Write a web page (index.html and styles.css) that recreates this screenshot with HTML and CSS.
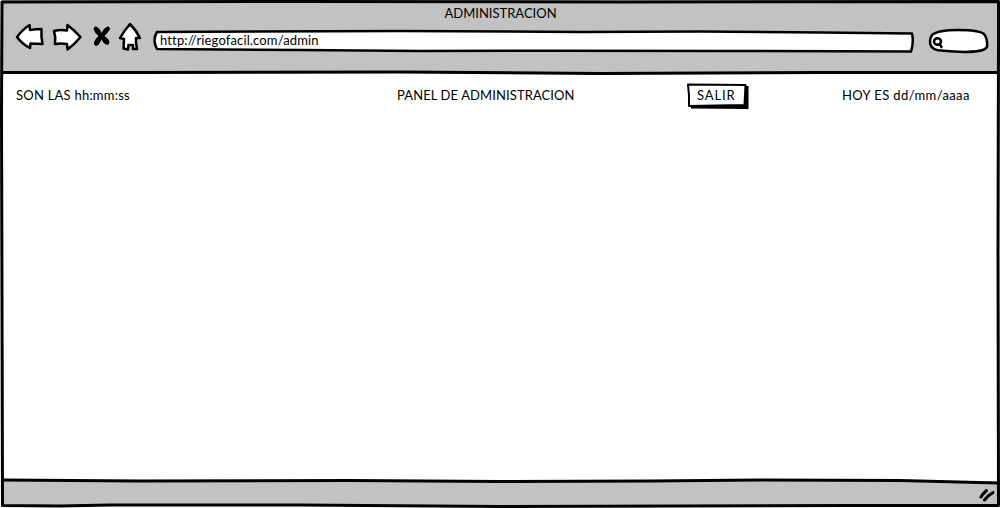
FILE: index.html
```html
<!DOCTYPE html>
<html lang="es">
<head>
<meta charset="utf-8">
<title>ADMINISTRACION</title>
<link rel="stylesheet" href="styles.css">
</head>
<body>
<div class="window">
  <header class="chrome">
    <div class="title"><span class="title-text">ADMINISTRACION</span></div>
    <div class="toolbar">
      <svg class="nav" width="130" height="32" viewBox="14 21 130 32">
        <path class="ink" d="M17 37Q23 29 29.500 25L30 30Q36 29 41.500 29Q41 37 42.500 44L30.500 43.500L30 48Q22 44 17 37Z"/>
        <path class="ink" d="M54 31Q60 29.500 67 30.500L67.500 25Q74 30 80.500 37Q74 45 67.500 49.500L67 44Q61 43 55 44Q56 37 54 31Z"/>
        <path class="solid" d="M96 26.500Q100 28 101.500 33Q104 27.500 108 26.500Q111 27 109.500 30Q107.500 33 104.500 36Q108 38 109.500 42Q109 46 106 44.500Q103 43 101.500 39.500Q99 45.500 96 46Q93 45 94.500 41Q96 38 98.500 36Q94.500 33 93.500 29Q94 26 96 26.500Z"/>
        <path class="ink" d="M130 24Q136 30 140 38L136 38Q135.500 43 137 49L133 49L133 45L128.500 45L128 49.500L123.500 48.500L124 39L120 38Q124 31 130 24Z"/>
      </svg>
      <div class="address">
        <svg class="shape" width="764" height="26" viewBox="152 28 764 26">
          <path class="ink" d="M157 32L400 31L580 32L700 31.500L822 32.500L912 33.500Q914 42 911 51.500L720 51L560 50.800L420 51L300 50L157 49Q152 40 157 32Z"/>
        </svg>
        <span class="url">http://riegofacil.com/admin</span>
      </div>
      <div class="search">
        <svg width="62" height="28" viewBox="928 27 62 28">
          <path class="ink" d="M932 35Q938 30 958 30Q979 30 984 34Q988 39 987 47Q984 52 964 52Q943 51 937 50Q930 48 930 42Q930 38 932 35Z"/>
          <ellipse class="ink" cx="937.500" cy="41.500" rx="3.500" ry="3.300"/>
          <path class="ink" d="M939.500 44L941.500 47"/>
        </svg>
      </div>
    </div>
  </header>
  <main class="page">
    <span class="clock">SON LAS hh:mm:ss</span>
    <span class="heading">PANEL DE ADMINISTRACION</span>
    <button class="exit">
      <svg class="shape" width="64" height="28" viewBox="686 82 64 28">
        <path class="solid" d="M691 86L748.500 86L748.500 109L691 108.500Z"/>
        <path class="ink thin" d="M688 84.500L745.500 85L744.500 105L689 106Q689.500 96 688 84.500Z"/>
      </svg>
      <span class="exit-text">SALIR</span>
    </button>
    <span class="date">HOY ES dd/mm/aaaa</span>
  </main>
  <footer class="status">
    <svg width="18" height="16" viewBox="978 487 18 16">
      <path class="grip" d="M981 497Q983 493.500 986.500 490.500M984.500 500Q988 495.500 993 492.500"/>
    </svg>
  </footer>
  <svg class="frame" width="1001" height="508" viewBox="0 0 1001 508">
    <path d="M2 2L300 1.500L620 2L998.500 1.500L998.500 40L998 250L998.500 505.500L850 505.500L500 506.500L300 505L110 505L60 506L2.500 505.500L2 300L1.500 110L2 2Z"/>
    <path d="M2 72.500L140 72.500L400 72L600 73.500L820 72.500L998 72.500"/>
    <path d="M2 480L140 481L350 480.500L500 481.500L650 481L760 480L900 480.500L998 483"/>
  </svg>
</div>
</body>
</html>
```
FILE: styles.css
```css
body {
  margin: 0;
  background: #fff;
  color: #000;
  font: 13px/16px Lato, "Open Sans", sans-serif;
}
.window {
  position: relative;
  display: flex;
  flex-direction: column;
  width: 1001px;
  height: 508px;
  overflow: hidden;
}
svg { display: block; flex: none; }
span { white-space: nowrap; }
.ink { fill: #fff; stroke: #000; stroke-width: 2.5; stroke-linejoin: round; stroke-linecap: round; }
.thin { stroke-width: 2; }
.solid { fill: #000; }
.grip { fill: none; stroke: #000; stroke-width: 3; stroke-linecap: round; }
.frame { position: absolute; inset: 0; pointer-events: none; }
.frame path { fill: none; stroke: #000; stroke-width: 3; stroke-linejoin: round; }
.chrome {
  box-sizing: border-box;
  height: 73px;
  margin: 0 2px;
  padding-top: 5px;
  background: #c2c2c2;
}
.title { height: 16px; padding-left: 442.5px; }
.toolbar { display: flex; align-items: flex-start; padding-left: 12px; }
.address { display: grid; width: 764px; margin: 7px 12px 0 8px; }
.address > *, .exit > * { grid-area: 1 / 1; }
.url { padding: 4px 0 0 8px; z-index: 1; letter-spacing: .14px; font-variant-ligatures: none; }
.search { padding-top: 6px; }
.page {
  display: flex;
  align-items: flex-start;
  box-sizing: border-box;
  height: 408px;
  padding: 14px 0 0 16px;
}
.clock { width: 381px; letter-spacing: .23px; }
.heading { width: 289px; letter-spacing: .1px; }
.exit {
  display: grid;
  width: 64px;
  height: 28px;
  margin: -5px 92px 0 0;
  padding: 0;
  border: 0;
  background: none;
  color: inherit;
  font: inherit;
  text-align: left;
}
.exit-text { padding: 5px 0 0 11px; z-index: 1; letter-spacing: .9px; }
.date { letter-spacing: .38px; }
.status {
  display: flex;
  justify-content: flex-end;
  box-sizing: border-box;
  height: 25px;
  margin: 0 2px;
  padding: 6px 3px 0 0;
  background: #c2c2c2;
}
```
